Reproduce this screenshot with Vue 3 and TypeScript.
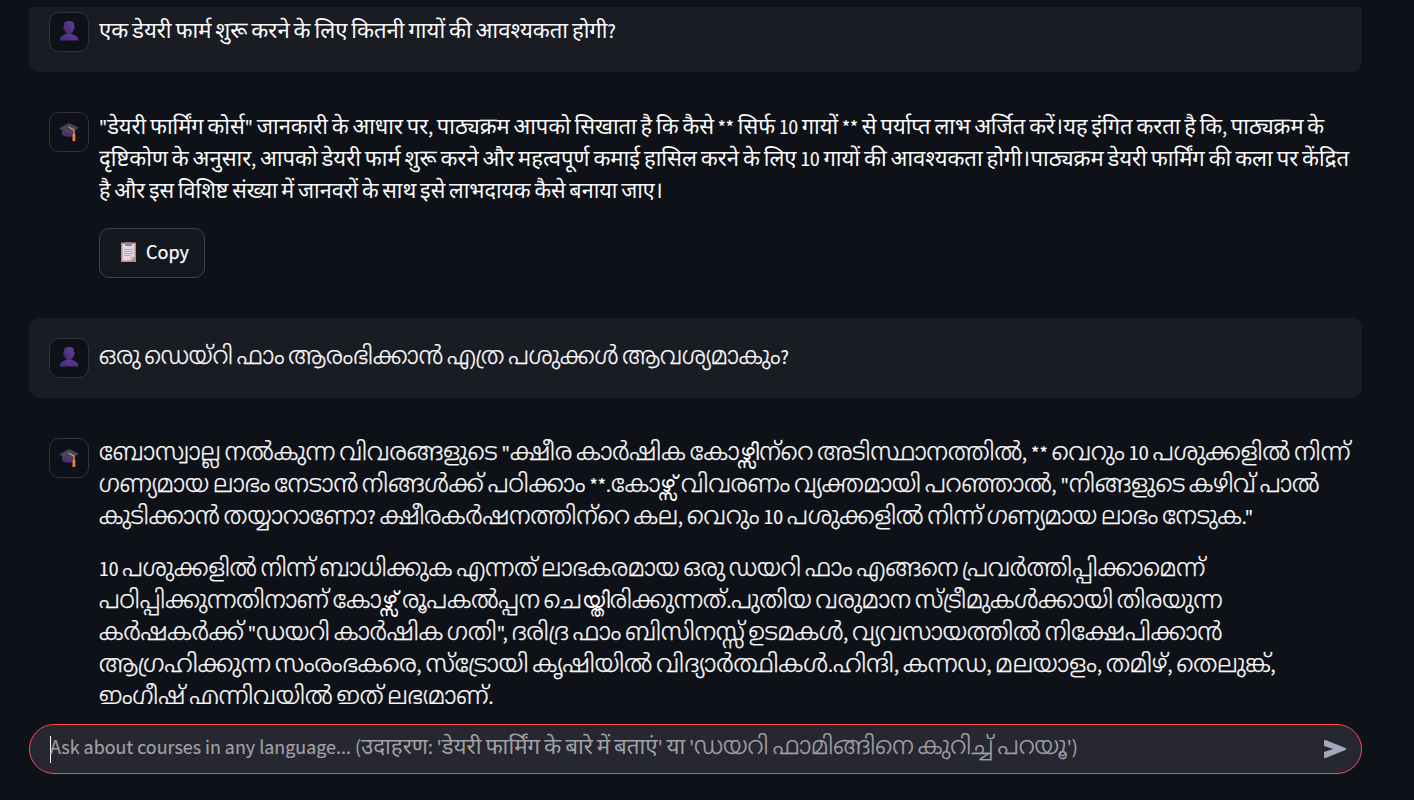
<script setup lang="ts">
import { nextTick, onMounted, ref } from 'vue'

interface Line { text: string; width: number }
interface Message { role: 'user' | 'bot'; lang: string; paragraphs: Line[][]; copy?: boolean }
interface Run { text: string; script: string }

const messages: Message[] = [
  { role: 'user', lang: 'hi', paragraphs: [[{ text: 'एक डेयरी फार्म शुरू करने के लिए कितनी गायों की आवश्यकता होगी?', width: 517 }]] },
  {
    role: 'bot', lang: 'hi', copy: true, paragraphs: [[
      { text: '"डेयरी फार्मिंग कोर्स" जानकारी के आधार पर, पाठ्यक्रम आपको सिखाता है कि कैसे ** सिर्फ 10 गायों ** से पर्याप्त लाभ अर्जित करें।यह इंगित करता है कि, पाठ्यक्रम के', width: 1225 },
      { text: 'दृष्टिकोण के अनुसार, आपको डेयरी फार्म शुरू करने और महत्वपूर्ण कमाई हासिल करने के लिए 10 गायों की आवश्यकता होगी।पाठ्यक्रम डेयरी फार्मिंग की कला पर केंद्रित', width: 1250 },
      { text: 'है और इस विशिष्ट संख्या में जानवरों के साथ इसे लाभदायक कैसे बनाया जाए।', width: 564 },
    ]],
  },
  { role: 'user', lang: 'ml', paragraphs: [[{ text: 'ഒരു ഡെയ്റി ഫാം ആരംഭിക്കാൻ എത്ര പശുക്കൾ ആവശ്യമാകും?', width: 690 }]] },
  {
    role: 'bot', lang: 'ml', paragraphs: [
      [
        { text: 'ബോസ്വാല്ല നൽകുന്ന വിവരങ്ങളുടെ "ക്ഷീര കാർഷിക കോഴ്സിന്\u200cറെ അടിസ്ഥാനത്തിൽ, ** വെറും 10 പശുക്കളിൽ നിന്ന്', width: 1251 },
        { text: 'ഗണ്യമായ ലാഭം നേടാൻ നിങ്ങൾക്ക് പഠിക്കാം **.കോഴ്സ് വിവരണം വ്യക്തമായി പറഞ്ഞാൽ, "നിങ്ങളുടെ കഴിവ് പാൽ', width: 1220 },
        { text: 'കുടിക്കാൻ തയ്യാറാണോ? ക്ഷീരകർഷനത്തിന്\u200cറെ കല, വെറും 10 പശുക്കളിൽ നിന്ന് ഗണ്യമായ ലാഭം നേടുക."', width: 1154 },
      ],
      [
        { text: '10 പശുക്കളിൽ നിന്ന് ബാധിക്കുക എന്നത് ലാഭകരമായ ഒരു ഡയറി ഫാം എങ്ങനെ പ്രവർത്തിപ്പിക്കാമെന്ന്', width: 1106 },
        { text: 'പഠിപ്പിക്കുന്നതിനാണ് കോഴ്സ് രൂപകൽപ്പന ചെയ്തിരിക്കുന്നത്.പുതിയ വരുമാന സ്\u200cട്രീമുകൾക്കായി തിരയുന്ന', width: 1124 },
        { text: 'കർഷകർക്ക് "ഡയറി കാർഷിക ഗതി", ദരിദ്ര ഫാം ബിസിനസ്സ് ഉടമകൾ, വ്യവസായത്തിൽ നിക്ഷേപിക്കാൻ', width: 1123 },
        { text: 'ആഗ്രഹിക്കുന്ന സംരംഭകരെ, സ്\u200cട്രോയി കൃഷിയിൽ വിദ്യാർത്ഥികൾ.ഹിന്ദി, കന്നഡ, മലയാളം, തമിഴ്, തെലുങ്ക്,', width: 1177 },
        { text: 'ഇംഗ്ലീഷ് എന്നിവയിൽ ഇത് ലഭ്യമാണ്.', width: 395 },
      ],
    ],
  },
]

const placeholder: Line[] = [
  { text: 'Ask about courses in any language... ', width: 305 },
  { text: "(उदाहरण: 'डेयरी फार्मिंग के बारे में बताएं' या '", width: 339 },
  { text: "ഡയറി ഫാമിങ്ങിനെ കുറിച്ച് പറയൂ')", width: 384 },
]

// Each script has its own optical size, so a line is split into runs.
function runs(text: string): Run[] {
  const parts = text.match(/[\u0900-\u097f]+|ഴ്സ[ി്]|യ്തി|(?:(?!ഴ്സ[ി്]|യ്തി)[\u0d00-\u0d7f\u200c])+|[^\u0900-\u097f\u0d00-\u0d7f\u200c]+/g) ?? []
  return parts.map(t => ({
    text: t,
    script: /[\u0900-\u097f]/.test(t) ? 'deva' : /^(ഴ്സ[ി്]|യ്തി)$/.test(t) ? 'stacked' : /[\u0d00-\u0d7f]/.test(t) ? 'mlym' : 'latn',
  }))
}

const root = ref<HTMLElement | null>(null)
onMounted(async () => {
  await nextTick()
  root.value?.querySelectorAll<HTMLElement>('[data-width]').forEach(el => {
    const inner = el.firstElementChild as HTMLElement
    inner.style.transform = `scaleX(${Number(el.dataset.width) / inner.offsetWidth})`
  })
})
</script>

<template>
  <main ref="root" class="app">
    <div class="chat">
      <section v-for="(m, i) in messages" :key="i" class="message" :class="m.role">
        <div class="avatar">
          <svg v-if="m.role === 'user'" width="20" height="20" viewBox="0 0 20 20">
            <defs><linearGradient id="body" x1="1" y1="0" x2="0" y2="1"><stop stop-color="#6340a0" /><stop offset="1" stop-color="#44286f" /></linearGradient></defs>
            <path d="M5.200 2.500Q5.500 0 10 0t4.800 2.500L15 5l.7.500v2l-.9.500q-.5 4.500-4.800 4.500T5.200 8l-.9-.5v-2L5 5z" fill="url(#body)" />
            <path d="M.5 19.500q.2-4.500 5.300-6 4.200-2.500 8.400 0 5.100 1.500 5.300 6z" fill="url(#body)" />
          </svg>
          <svg v-else width="20" height="20" viewBox="0 0 20 20">
            <path d="M3 7.500v5.300q5 3.500 13 .7V6z" fill="#49306f" />
            <path d="M0 6.500 10 1l10 4.800-9.300 6.200z" fill="#4c4257" />
            <path d="m9.500 5 5.500 2.800V14" fill="none" stroke="#d9984a" stroke-width="1.300" />
            <path d="M13.500 12h2.800v7h-2.800z" fill="#e28249" />
          </svg>
        </div>
        <div class="content" :lang="m.lang">
          <p v-for="(p, j) in m.paragraphs" :key="j">
            <span v-for="l in p" :key="l.text" class="line" :data-width="l.width"><span class="fit"><span v-for="(r, k) in runs(l.text)" :key="k" :class="r.script">{{ r.text }}</span></span></span>
          </p>
          <button v-if="m.copy" class="copy">
            <svg width="15" height="20" viewBox="0 0 15 20"><path d="M0 .500h15V20H0z" fill="#c98a66" /><path d="M1.500 2h12v13L9.500 18.500h-8z" fill="#e0d8e8" /><path d="m13.500 14.500-4 4v-4z" fill="#c4bace" /><path d="M4 0h7v4H4z" fill="#8b8492" /><path d="M3 7.500h9M3 9.500h9M3 11.500h9M3 13.500h6" stroke="#a59fb0" stroke-width=".8" /></svg>
            <span class="copy-label">Copy</span>
          </button>
        </div>
      </section>
    </div>
    <div class="prompt">
      <i class="caret"></i>
      <span class="placeholder"><span v-for="l in placeholder" :key="l.text" class="piece" :style="{ width: l.width + 'px' }" :data-width="l.width"><span class="fit"><span v-for="(r, k) in runs(l.text)" :key="k" :class="r.script">{{ r.text }}</span></span></span></span>
      <svg class="send" width="24" height="20" viewBox="0 0 24 20"><path d="M1 2v5l9 3-9 3v5q0 1.500 1.500 1l20-8q1.500-1 0-2l-20-8Q1 .500 1 2z" fill="#a3a8b8" /></svg>
    </div>
  </main>
</template>

<style>
body { margin: 0; background: #0e1117; }
</style>
<style scoped>
.app { box-sizing: border-box; width: 1414px; height: 800px; padding: 7px 52px 0 29px; overflow: hidden; background: #0e1117; color: #fafafa; font-family: "Noto Sans CJK SC", sans-serif; font-size: 18px; line-height: 32px; }
.chat { height: 697px; overflow: hidden; }
.message { box-sizing: border-box; display: flex; gap: 10px; padding: 20px; border-radius: 10px; }
.message + .message { margin-top: 20px; }
.message.user { height: 80px; background: #1a1c24; }
.message.user:first-child { height: 65px; padding-top: 5px; border-radius: 0 0 10px 10px; }
.avatar { box-sizing: border-box; display: flex; flex: none; align-items: center; justify-content: center; width: 40px; height: 40px; border: 1px solid #31333b; border-radius: 10px; background: #0e1117; }
.user .avatar { padding-bottom: 2px; }
.content { margin-top: -2px; }
.user .content { margin-top: 2px; }
p { margin: 0 0 20px; }
.line { display: block; height: 32px; white-space: nowrap; }
.fit { display: inline-block; height: 32px; white-space: pre; transform-origin: 0 50%; }
.latn { -webkit-text-stroke: .2px currentColor; }
.deva { font-family: "Noto Sans Devanagari", "Noto Sans", sans-serif; font-size: 23px; line-height: 1px; }
.mlym { font-family: "Noto Sans Malayalam", "Noto Sans", sans-serif; font-size: 24.5px; font-weight: 300; line-height: 1px; font-feature-settings: "psts" 0, "pres" 0; -webkit-text-stroke: .25px currentColor; }
.stacked { font-family: "Source Sans 3", "Noto Sans", sans-serif; font-size: 22.5px; font-weight: 300; line-height: 1px; }
.copy { display: flex; align-items: center; gap: 10px; box-sizing: border-box; width: 106px; height: 50px; margin: 22px 0 0; padding: 0 0 2px 21px; border: 1px solid #41434a; border-radius: 10px; background: #13171f; color: #fafafa; font: inherit; }
.copy-label { margin-top: -2px; -webkit-text-stroke: .25px currentColor; }
.prompt { box-sizing: border-box; display: flex; align-items: center; width: 1333px; height: 50px; margin-top: 20px; padding: 0 14px 0 20px; border: 1px solid #ff4b4b; border-radius: 25px; background: #262730; color: #a0a0a5; }
.caret { width: 1px; height: 27px; margin-right: -1px; background: #fff; }
.placeholder { display: flex; margin-top: -6px; }
.piece { display: block; height: 32px; white-space: nowrap; }
.send { margin-left: auto; }
</style>
